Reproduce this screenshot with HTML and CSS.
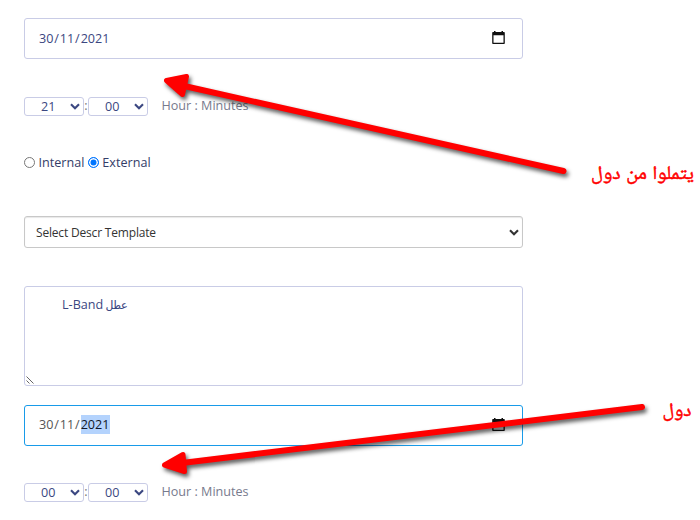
FILE: index.html
```
<!DOCTYPE html>
<html lang="en">
<head>
<meta charset="utf-8">
<title>Schedule form</title>
<link rel="stylesheet" href="styles.css">
</head>
<body>
<svg class="defs" width="0" height="0" aria-hidden="true">
  <symbol id="chevron" viewBox="0 0 10 7"><path d="M1 1.2 5 5.2 9 1.2" fill="none" stroke="currentColor" stroke-width="2.1"/></symbol>
  <symbol id="calendar" viewBox="0 0 13 14"><path d="M1 1h11a.8.8 0 0 1 .8.8v10.4a.8.8 0 0 1-.8.8H1a.8.8 0 0 1-.8-.8V1.800A.8.8 0 0 1 1 1ZM1.500 4.200v7.500h10V4.200ZM2 0h1.500v1H2ZM9.500 0H11v1H9.500Z" fill="#101010" fill-rule="evenodd"/></symbol>
</svg>
<form class="form">
  <div class="field date"><span class="date-text">30<i>/</i>11<i>/</i>2021</span><svg class="calendar"><use href="#calendar"/></svg></div>
  <div class="time">
    <div class="number"><span>21</span><svg class="chevron"><use href="#chevron"/></svg></div>
    <span class="colon">:</span>
    <div class="number"><span>00</span><svg class="chevron"><use href="#chevron"/></svg></div>
    <span class="hint">Hour : Minutes</span>
  </div>
  <div class="choices">
    <span class="radio"></span><span class="choice">Internal</span>
    <span class="radio checked"></span><span class="choice">External</span>
  </div>
  <div class="template"><span class="template-text">Select Descr Template</span><svg class="chevron"><use href="#chevron"/></svg></div>
  <div class="field description"><span class="latin">L-Band</span><span class="arabic" dir="rtl">عطل</span>
    <svg class="grip" viewBox="0 0 8 8"><path d="M.5.5l7 7M.5 4.500l3 3" stroke="#555" stroke-width=".9"/></svg>
  </div>
  <div class="field date focused"><span class="date-text">30<i>/</i>11<i>/</i><mark>2021</mark></span><svg class="calendar"><use href="#calendar"/></svg></div>
  <div class="time">
    <div class="number"><span>00</span><svg class="chevron"><use href="#chevron"/></svg></div>
    <span class="colon">:</span>
    <div class="number"><span>00</span><svg class="chevron"><use href="#chevron"/></svg></div>
    <span class="hint">Hour : Minutes</span>
  </div>
</form>
<svg class="overlay" viewBox="0 0 700 520">
  <g class="arrow">
    <path d="M182 85.500 563.500 171" stroke-width="6" stroke-linecap="round"/>
    <path d="M166.500 80.500 186.500 76.500 182.500 94.500Z" stroke-width="5" stroke-linejoin="round"/>
  </g>
  <g class="arrow">
    <path d="M182 463 642 407" stroke-width="6" stroke-linecap="round"/>
    <path d="M164.500 465 183 454.500 184.500 471.500Z" stroke-width="5" stroke-linejoin="round"/>
  </g>
  <text class="note" x="642.500" y="178.500" textLength="103" lengthAdjust="spacingAndGlyphs">يتملوا من دول</text>
  <text class="note" x="677" y="415.500" textLength="29" lengthAdjust="spacingAndGlyphs">دول</text>
</svg>
</body>
</html>
```
FILE: styles.css
```
* { box-sizing: border-box; }
body {
  margin: 0;
  height: 520px;
  overflow: hidden;
  position: relative;
  background: #fff;
  font: 12.6px/20px "Open Sans", "Noto Sans", sans-serif;
  color: #3b4781;
}
.defs { position: absolute; }
.form { width: 523px; padding: 18px 0 0 24px; }
.field { border: 1px solid #c9cce6; border-radius: 3px; background: #fff; }
.date {
  height: 41px;
  padding: 0 17px 0 14px;
  display: flex;
  align-items: center;
  justify-content: space-between;
}
.date-text { margin-top: 1px; }
.date-text i { font-style: normal; padding: 0 .9px; }
.date-text mark { background: #b4d3fd; color: #101828; display: inline-block; height: 19px; line-height: 19px; padding-right: 1px; }
.calendar { width: 13px; height: 14px; margin-top: -1px; }
.focused { border-color: #189be9; color: #555; }
.focused .date-text { margin-top: -1px; }
.time { margin-top: 38px; height: 19px; display: flex; align-items: center; }
.number {
  width: 60px;
  height: 19px;
  border: 1px solid #c9cce6;
  border-radius: 3px;
  display: flex;
  align-items: center;
  justify-content: space-between;
  padding: 0 3px 0 16px;
}
.number .chevron { margin-top: -1px; }
.chevron { width: 10px; height: 7px; flex: none; }
.colon { width: 4px; color: #777; display: flex; justify-content: center; margin-top: -2px; }
.hint { margin: -1px 0 0 13.5px; color: #777a8d; }
.choices { margin-top: 37px; height: 20px; display: flex; align-items: center; color: #343d68; }
.radio { width: 11px; height: 11px; border: 1px solid #777; border-radius: 50%; margin: -2px 3.500px 0 0; }
.choice + .radio { margin-left: 4px; margin-right: 3px; }
.checked { border-color: #0075ff; background: #0075ff; box-shadow: inset 0 0 0 1.5px #fff; }
.template {
  margin-top: 43px;
  height: 32px;
  border: 1px solid #c8c8c8;
  border-radius: 3px;
  box-shadow: inset 0 1px 1px #e8e8e8;
  display: flex;
  align-items: center;
  justify-content: space-between;
  padding: 0 3px 0 11px;
  color: #333;
}
.template-text { font-size: 12px; letter-spacing: -.18px; margin-top: 1px; }
.description { position: relative; margin: 38px 0 19px; height: 100px; padding: 8px 37px; display: flex; gap: 3px; }
.arabic { font-family: "DejaVu Sans Mono", "DejaVu Sans", sans-serif; font-size: 12px; }
.grip { position: absolute; left: 1px; bottom: 1px; width: 8px; height: 8px; }
.focused + .time { margin-top: 37px; }
.overlay { position: absolute; inset: 0; width: 700px; height: 520px; pointer-events: none; }
.arrow { stroke: #f00; fill: #f00; filter: drop-shadow(2px 3px 2px rgba(0, 0, 0, .65)); }
.note { fill: #f00; stroke: #f00; stroke-width: .5px; font: 19px "Noto Naskh Arabic", "Noto Sans Arabic", "DejaVu Sans", sans-serif; word-spacing: 1px; text-anchor: middle; direction: rtl; }
```
